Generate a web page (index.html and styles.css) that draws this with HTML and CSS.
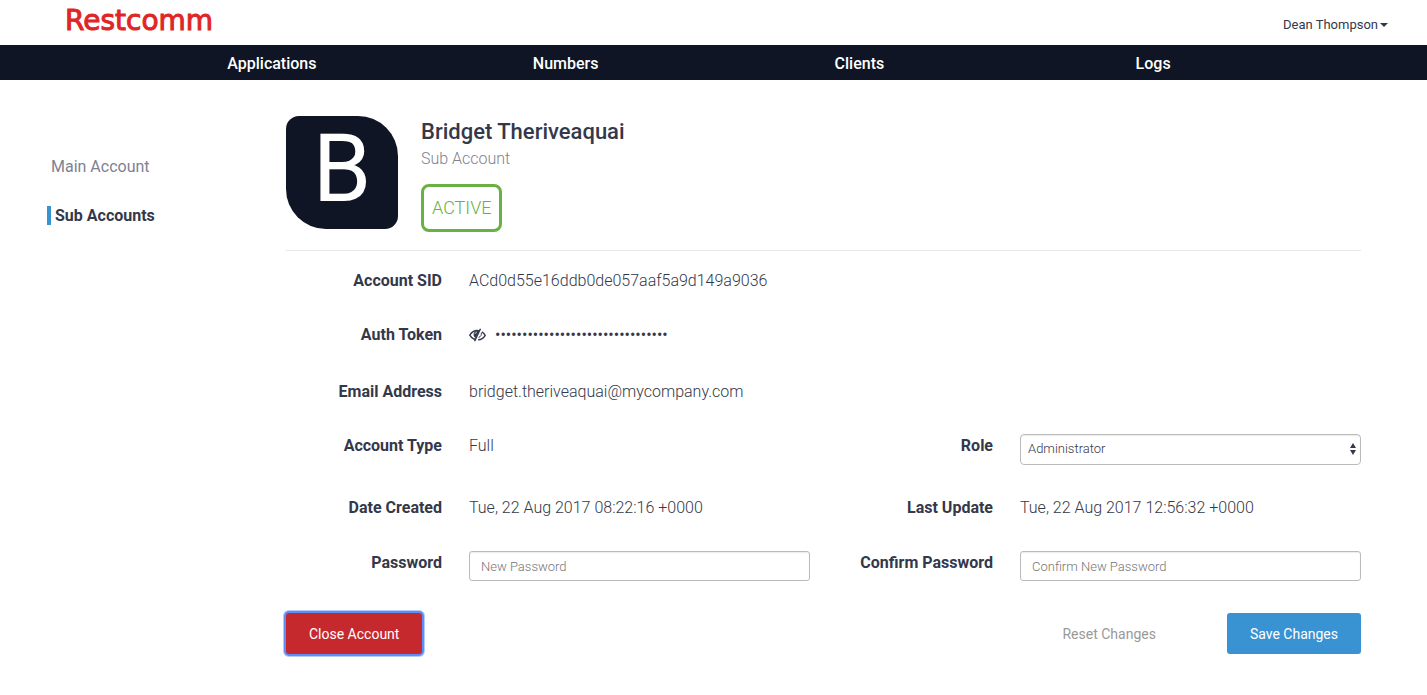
FILE: index.html
```html
<!DOCTYPE html>
<html lang="en">
<head>
<meta charset="utf-8">
<title>Restcomm - Sub Account</title>
<link rel="stylesheet" href="styles.css">
</head>
<body>
<header class="topbar">
  <a class="brand" href="#">Restcomm</a>
  <button class="user-menu" type="button">Dean Thompson<span class="caret"></span></button>
</header>
<nav class="mainnav">
  <a href="#">Applications</a>
  <a href="#">Numbers</a>
  <a href="#">Clients</a>
  <a href="#">Logs</a>
</nav>
<div class="page">
  <nav class="sidebar">
    <a class="side-link" href="#">Main Account</a>
    <a class="side-link side-link-active" href="#">Sub Accounts</a>
  </nav>
  <main class="content">
    <section class="profile">
      <div class="avatar">B</div>
      <div class="profile-info">
        <h1 class="profile-name">Bridget Theriveaquai</h1>
        <p class="profile-kind">Sub Account</p>
        <span class="status">ACTIVE</span>
      </div>
    </section>
    <form class="details">
      <div class="row">
        <span class="label">Account SID</span>
        <span class="value">ACd0d55e16ddb0de057aaf5a9d149a9036</span>
      </div>
      <div class="row row-token">
        <span class="label">Auth Token</span>
        <span class="value token">
          <button class="reveal" type="button" aria-label="Show token">
            <svg width="17" height="14" viewBox="0 0 17 14" fill="none" stroke="currentColor">
              <path d="M7 11.6C4.100 11.200 2 9.300.8 7.200 2.500 4.300 5 2.500 8.300 2.500c.7 0 1.400.1 2 .3M12.800 3.900c1.500.9 2.600 2.100 3.400 3.400-1.500 2.600-4 4.300-7 4.400" stroke-width="1.400"/>
              <path d="M10.200 2.700 6.700 9.900C5 9.100 4.400 7.700 4.600 6c.2-1.700 1.400-3.200 3.700-3.300z" fill="currentColor" stroke="none"/>
              <path d="M6 6.100c.1-1.100.9-1.900 2-2" stroke="#fff" stroke-width=".8"/>
              <path d="M11.500.7 5.600 13.200" stroke-width="1.400"/>
              <path d="M12.300 4.800c.5 1.900-.6 4-2.700 4.700" stroke-width="1"/>
            </svg>
          </button>
          <span class="mask">••••••••••••••••••••••••••••••••</span>
        </span>
      </div>
      <div class="row">
        <span class="label">Email Address</span>
        <span class="value">bridget.theriveaquai@mycompany.com</span>
      </div>
      <div class="row">
        <span class="label">Account Type</span>
        <span class="value">Full</span>
        <label class="label" for="role">Role</label>
        <div class="select-wrap">
          <select class="field select" id="role"><option>Administrator</option></select>
          <svg class="select-arrows" width="8" height="14" viewBox="0 0 8 14" fill="currentColor"><path d="M4 1 7 6H1zM1 8h6l-3 5z"/></svg>
        </div>
      </div>
      <div class="row row-dates">
        <span class="label">Date Created</span>
        <span class="value">Tue, 22 Aug 2017 08:22:16 +0000</span>
        <span class="label">Last Update</span>
        <span class="value">Tue, 22 Aug 2017 12:56:32 +0000</span>
      </div>
      <div class="row">
        <label class="label" for="password">Password</label>
        <input class="field" id="password" type="password" placeholder="New Password">
        <label class="label" for="confirm">Confirm Password</label>
        <input class="field" id="confirm" type="password" placeholder="Confirm New Password">
      </div>
      <div class="actions">
        <button class="btn btn-danger" type="button">Close Account</button>
        <button class="btn btn-link" type="reset">Reset Changes</button>
        <button class="btn btn-primary" type="submit">Save Changes</button>
      </div>
    </form>
  </main>
</div>
</body>
</html>
```
FILE: styles.css
```css
* { box-sizing: border-box; }
body {
  margin: 0;
  background: #fff;
  color: #33384a;
  font: 300 16px/24px Roboto, sans-serif;
}
a { color: inherit; text-decoration: none; }
button { font-family: inherit; }

.topbar {
  display: flex;
  justify-content: space-between;
  align-items: center;
  height: 45px;
  padding: 0 39px 0 65px;
}
.brand {
  color: #df2626;
  font: 400 28px/40px "DejaVu Sans", sans-serif;
  padding-bottom: 4px;
  -webkit-text-stroke: 1px #df2626;
}
.user-menu {
  display: flex;
  align-items: center;
  gap: 2px;
  padding: 4px 0 0;
  border: 0;
  background: none;
  color: #33384a;
  font-size: 13px;
  font-weight: 400;
}
.caret {
  border: 4px solid transparent;
  border-top-color: currentColor;
  border-bottom: 0;
}

.mainnav {
  display: grid;
  grid-template-columns: repeat(4, 1fr);
  padding: 2px 127px 0 125px;
  background: #0f1524;
  color: #fff;
  font-weight: 500;
  line-height: 33px;
  text-align: center;
}

.page {
  display: grid;
  grid-template-columns: 239px 1fr;
  padding: 36px 66px 32px 47px;
}
.sidebar {
  display: flex;
  flex-direction: column;
  gap: 30px;
  padding-top: 41px;
  line-height: 19px;
}
.side-link {
  padding-left: 4px;
  color: #7d8291;
  font-weight: 400;
}
.side-link-active {
  border-left: 4px solid #3993d3;
  color: #33384a;
  font-weight: 700;
}

.profile {
  display: flex;
  gap: 23px;
  padding-bottom: 18px;
  border-bottom: 1px solid #e7e8ea;
}
.avatar {
  width: 112px;
  height: 113px;
  border-radius: 13px 40px;
  background: #0f1524;
  color: #fff;
  font-size: 94px;
  font-weight: 400;
  line-height: 106px;
  text-align: center;
}
.profile-name {
  margin: 4px 0 0;
  font-size: 22px;
  font-weight: 500;
  line-height: 24px;
}
.profile-kind {
  margin: 3px 0 13px;
  color: #7d8291;
}
.status {
  display: inline-block;
  padding: 9px 8px;
  border: 3px solid #69b045;
  border-radius: 8px;
  color: #69b045;
  font-size: 18px;
}

.details {
  display: flex;
  flex-direction: column;
  gap: 30px;
  padding-top: 18px;
}
.row {
  display: grid;
  grid-template-columns: 156px 1fr 156px 1fr;
  column-gap: 27px;
  align-items: start;
}
.row-token { padding-bottom: 3px; }
.row-dates { padding: 1px 0; }
.label {
  font-weight: 700;
  text-align: right;
}
.token {
  display: flex;
  align-items: center;
  gap: 9px;
}
.reveal {
  display: flex;
  padding: 0;
  border: 0;
  background: none;
  color: #33384a;
}
.mask { font-weight: 400; }
.field {
  width: 100%;
  height: 30px;
  padding: 0 11px;
  border: 1px solid #bbb;
  border-radius: 3px;
  background: #fff;
  box-shadow: inset 0 1px 1px rgba(0, 0, 0, 0.08);
  color: #33384a;
  font: 300 13px/20px Roboto, sans-serif;
}
.field::placeholder { color: #777; opacity: 1; }
.select-wrap {
  position: relative;
  display: flex;
}
.select {
  height: 31px;
  padding: 0 7px 2px;
  border-radius: 4px;
  appearance: none;
}
.select-arrows {
  position: absolute;
  top: 8px;
  right: 4px;
  pointer-events: none;
}

.actions {
  display: flex;
  align-items: center;
  padding-top: 2px;
}
.btn {
  height: 41px;
  padding: 0 23px;
  border: 0;
  border-radius: 3px;
  background: none;
  font-size: 14px;
  font-weight: 400;
}
.btn-danger {
  margin-right: auto;
  background: #c5292d;
  box-shadow: 0 0 0 2px #5f8cf5, 0 0 0 3px #b5cbfa;
  color: #fff;
}
.btn-link {
  margin-right: 48px;
  color: #999;
}
.btn-primary {
  background: #3993d3;
  color: #fff;
}
```
